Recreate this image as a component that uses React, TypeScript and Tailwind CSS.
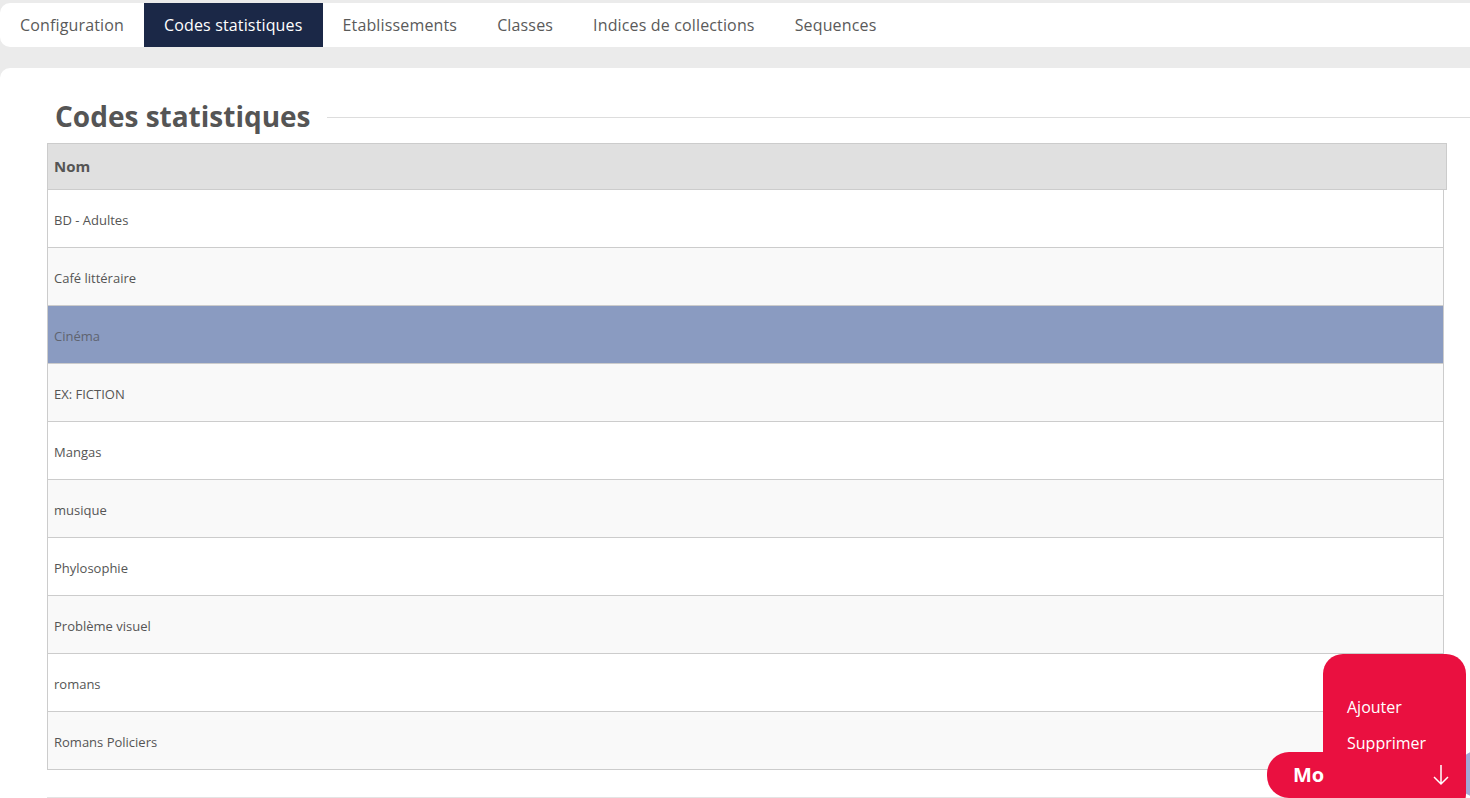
const tabs = [
  "Configuration",
  "Codes statistiques",
  "Etablissements",
  "Classes",
  "Indices de collections",
  "Sequences",
];

const rows = [
  "BD - Adultes",
  "Café littéraire",
  "Cinéma",
  "EX: FICTION",
  "Mangas",
  "musique",
  "Phylosophie",
  "Problème visuel",
  "romans",
  "Romans Policiers",
];

const App = () => {
  return (
    <div
      className="relative h-[798px] w-full overflow-hidden bg-[#ebebeb] text-[#555555]"
      style={{ fontFamily: '"Open Sans", "Noto Sans", sans-serif' }}
    >
      {/* Onglets */}
      <nav className="mt-[3px] flex h-[44px] items-stretch rounded-l-[10px] bg-white">
        {tabs.map((tab) => (
          <div
            key={tab}
            className={
              tab === "Codes statistiques"
                ? "flex items-center bg-[#1b2847] px-5 text-[16px] tracking-[0.15px] text-white"
                : "flex items-center px-5 text-[16px] tracking-[0.15px] text-[#5a5a5a]"
            }
          >
            {tab}
          </div>
        ))}
      </nav>

      {/* Carte principale */}
      <main className="mt-[21px] h-[800px] rounded-tl-[10px] bg-white pl-[47px]">
        <div className="flex items-center pt-[28px]">
          <h1 className="ml-2 text-[28px] font-bold leading-[40px] text-[#555555]">
            Codes statistiques
          </h1>
          <div className="ml-4 mt-[2px] h-px flex-1 bg-[#dddddd]" />
        </div>

        <div className="mt-[7px] w-[1400px]">
          <div className="flex h-[47px] items-center border border-[#cccccc] bg-[#e0e0e0] px-[6px] text-[15px] font-bold">
            Nom
          </div>
          <div className="w-[1397px] border-x border-[#cccccc]">
            {rows.map((row, idx) => (
              <div
                key={row}
                className={
                  row === "Cinéma"
                    ? "flex h-[58px] items-center border-b border-[#cccccc] bg-[#8a9bc1] px-[6px] pt-[5px] text-[13px] text-[#5f6470]"
                    : idx % 2 === 0
                      ? "flex h-[58px] items-center border-b border-[#cccccc] bg-white px-[6px] pt-[5px] text-[13px]"
                      : "flex h-[58px] items-center border-b border-[#cccccc] bg-[#f9f9f9] px-[6px] pt-[5px] text-[13px]"
                }
              >
                {row}
              </div>
            ))}
          </div>
        </div>

        <div className="mt-[27px] h-px w-[1400px] bg-[#e4e4e4]" />
      </main>

      {/* Bouton flottant */}
      <div className="absolute right-[-34px] top-[750px] h-[48px] w-[48px] rounded-full bg-[#a3a7d6]" />
      <div className="absolute left-[1323px] top-[654px] h-[160px] w-[143px] rounded-[20px] bg-[#ea1040]">
        <div className="flex flex-col gap-3 pl-6 pt-[41px] text-[16px] font-medium text-white">
          <span>Ajouter</span>
          <span>Supprimer</span>
        </div>
      </div>
      <div className="absolute left-[1267px] top-[752px] flex h-[46px] w-[199px] items-center justify-between rounded-l-[22px] rounded-br-[20px] bg-[#ea1040] pl-[26px] pr-[16px] text-white">
        <span className="text-[20px] font-bold">Mo</span>
        <svg width="18" height="22" viewBox="0 0 18 22" fill="none" stroke="white" strokeWidth="1.5">
          <path d="M9 1v19M2 13l7 7 7-7" />
        </svg>
      </div>
    </div>
  );
};

export default App;
